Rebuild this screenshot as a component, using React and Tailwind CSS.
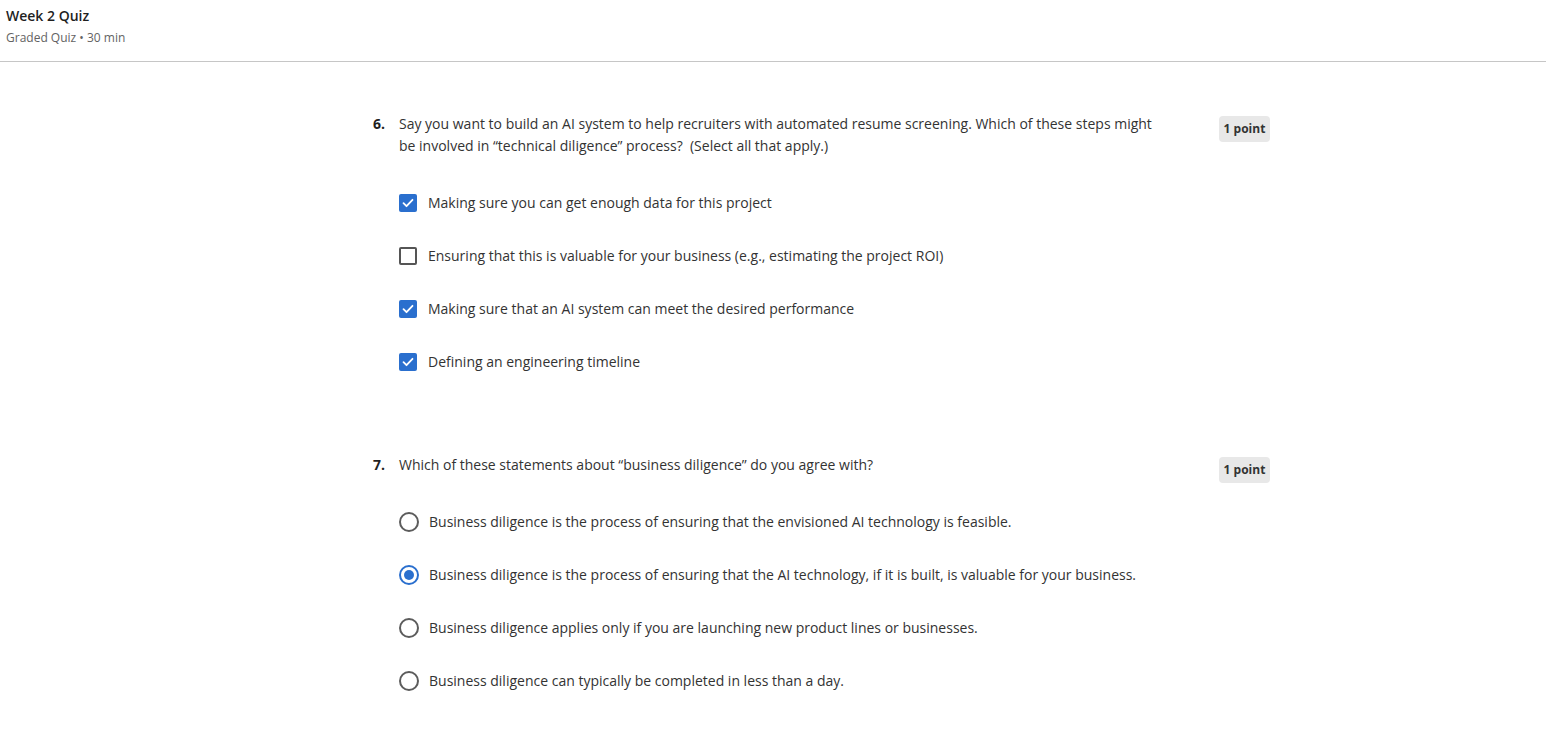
import React from 'react';

const questions = [
    {
        num: '6.',
        text: 'Say you want to build an AI system to help recruiters with automated resume screening. Which of these steps might be involved in \u201ctechnical diligence\u201d process?\u00a0 (Select all that apply.)',
        type: 'checkbox',
        options: [
            { label: 'Making sure you can get enough data for this project', on: true },
            { label: 'Ensuring that this is valuable for your business (e.g., estimating the project ROI)', on: false },
            { label: 'Making sure that an AI system can meet the desired performance', on: true },
            { label: 'Defining an engineering timeline', on: true },
        ],
    },
    {
        num: '7.',
        text: 'Which of these statements about \u201cbusiness diligence\u201d do you agree with?',
        type: 'radio',
        options: [
            { label: 'Business diligence is the process of ensuring that the envisioned AI technology is feasible.', on: false },
            { label: 'Business diligence is the process of ensuring that the AI technology, if it is built, is valuable for your business.', on: true },
            { label: 'Business diligence applies only if you are launching new product lines or businesses.', on: false },
            { label: 'Business diligence can typically be completed in less than a day.', on: false },
        ],
    },
];

function Checkbox({ on }) {
    if (on) {
        return (
            <span className="w-[18px] h-[18px] rounded-[2px] bg-[#2a6fce] flex items-center justify-center shrink-0">
                <svg width="14" height="14" viewBox="0 0 14 14" fill="none">
                    <path d="M2.5 7.2l3 3 6-6.4" stroke="white" strokeWidth="1.8" strokeLinecap="round" strokeLinejoin="round" />
                </svg>
            </span>
        );
    }
    return <span className="w-[18px] h-[18px] rounded-[2px] border-2 border-[#555] bg-white shrink-0"></span>;
}

function Radio({ on }) {
    if (on) {
        return (
            <span className="w-[20px] h-[20px] rounded-full border-2 border-[#2a6fce] flex items-center justify-center shrink-0">
                <span className="w-[10px] h-[10px] rounded-full bg-[#2a6fce]"></span>
            </span>
        );
    }
    return <span className="w-[20px] h-[20px] rounded-full border-2 border-[#5c5c5c] bg-white shrink-0"></span>;
}

export default function App() {
    return (
        <div className="min-h-screen bg-white text-[#1f1f1f] font-['Open_Sans',sans-serif]">
            {/* Header */}
            <div className="h-[62px] border-b border-[#c6c6c6] px-[6px] pt-[6px]">
                <h1 className="text-[14px] leading-[20px] font-semibold text-[#1f1f1f]">Week 2 Quiz</h1>
                <p className="text-[12px] leading-[18px] mt-[3px] text-[#636363]">Graded Quiz &bull; 30 min</p>
            </div>

            <div className="pl-[373px] pt-[51px]">
                <div className="w-[897px] flex flex-col gap-[81px]">
                    {questions.map((q) => (
                        <div key={q.num}>
                            <div className="flex items-start">
                                <span className="w-[26px] text-[14px] leading-[22px] font-bold shrink-0">{q.num}</span>
                                <p className="w-[770px] text-[14px] leading-[22px] text-[#333]">{q.text}</p>
                                <span className="ml-auto mt-[3px] -mb-[7px] h-[26px] w-[51px] text-center rounded-[4px] bg-[#e8e8e8] text-[12px] font-bold leading-[26px] text-[#333]">1 point</span>
                            </div>
                            <div className="mt-[35px] pl-[26px] flex flex-col gap-[31px]">
                                {q.options.map((o) => (
                                    <div key={o.label} className="flex items-center gap-[11px] h-[22px]">
                                        {q.type === 'checkbox' ? <Checkbox on={o.on} /> : <Radio on={o.on} />}
                                        <span className={`text-[14px] leading-[22px] text-[#333] ${q.type === 'radio' ? '-ml-[1px]' : ''}`}>{o.label}</span>
                                    </div>
                                ))}
                            </div>
                        </div>
                    ))}
                </div>
            </div>
        </div>
    );
}
